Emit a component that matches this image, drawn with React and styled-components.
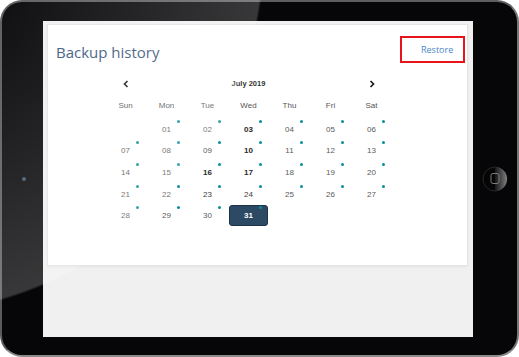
import React from "react";
import styled, { createGlobalStyle } from "styled-components";

const Global = createGlobalStyle`
  html, body { margin: 0; padding: 0; background: #ffffff; overflow: hidden; }
  * { box-sizing: border-box; }
`;

const Tablet = styled.div`
  position: relative;
  display: flex;
  width: 519px;
  height: 357px;
  padding: 19px 0 18px;
  border: 2px solid;
  border-color: #5e5e5e #777 #8a8a8a #5a5a5a;
  border-radius: 22px;
  background: #060608;
`;

const Side = styled.div`
  flex: none;
  width: ${(p) => p.$w}px;
  display: flex;
  align-items: center;
  justify-content: center;
`;

const Camera = styled.div`
  width: 4px;
  height: 4px;
  border-radius: 50%;
  background: #3d536a;
  margin-left: 2px;
`;

const Screen = styled.div`
  flex: none;
  width: 430px;
  height: 316px;
  padding: 3px 5px 0 4px;
  background: #f0f0f0;
`;

const Card = styled.div`
  height: 242px;
  background: #ffffff;
  border: 1px solid #e4e4e4;
  box-shadow: 0 1px 2px rgba(0, 0, 0, 0.06);
`;

const Header = styled.div`
  display: flex;
  justify-content: space-between;
  align-items: flex-start;
  padding: 11px 2px 0 8px;
`;

const Title = styled.h1`
  margin: 5.5px 0 0;
  font-family: "Open Sans", "Noto Sans", sans-serif;
  font-size: 15px;
  line-height: 20px;
  font-weight: 400;
  color: #37557a;
`;

const RestoreButton = styled.button`
  display: flex;
  align-items: center;
  width: 65px;
  height: 27px;
  padding: 0 0 0 19px;
  border: 2px solid #e8141b;
  background: transparent;
  font-family: "Open Sans", "Noto Sans", sans-serif;
  font-size: 9px;
  color: #4a86c8;
  cursor: pointer;
`;

const Calendar = styled.div`
  width: 287px;
  margin-left: 57px;
  font-family: "Liberation Sans", Arial, sans-serif;
`;

const Row = styled.div`
  display: grid;
  grid-template-columns: repeat(7, 41px);
  grid-auto-rows: ${(p) => p.$h}px;
  margin-top: ${(p) => p.$mt}px;
`;

const NavBtn = styled.div`
  display: flex;
  align-items: center;
  justify-content: center;
  grid-column: ${(p) => p.$col};
`;

const MonthLabel = styled.div`
  grid-column: 2 / 7;
  display: flex;
  align-items: center;
  justify-content: center;
  font-size: 7.5px;
  font-weight: 700;
  color: #333;
`;

const WeekDay = styled.div`
  display: flex;
  align-items: center;
  justify-content: center;
  font-size: 8px;
  color: #555;
`;

const Cell = styled.div`
  position: relative;
  display: flex;
  align-items: center;
  justify-content: center;
`;

const DayNum = styled.div`
  display: flex;
  align-items: center;
  justify-content: center;
  width: 39px;
  height: 21px;
  border-radius: 3px;
  font-size: 8px;
  font-weight: ${(p) => (p.$selected || p.$strong ? 700 : 400)};
  color: ${(p) => (p.$selected ? "#ffffff" : p.$strong ? "#2a2a2a" : p.$mid ? "#3c3c3c" : "#5a5a5a")};
  background: ${(p) => (p.$selected ? "#2c4a64" : "transparent")};
  border: 1px solid ${(p) => (p.$selected ? "#1d3347" : "transparent")};
`;

const Dot = styled.span`
  position: absolute;
  left: calc(50% + 10px);
  top: calc(50% - 9.5px);
  width: 3px;
  height: 3px;
  border-radius: 50%;
  background: #078f9b;
`;

const Gloss = styled.div`
  position: absolute;
  inset: -2px;
  border-radius: 22px;
  pointer-events: none;
  background: radial-gradient(
    circle 365px at -100px -50px,
    rgba(255, 255, 255, 0.04) 30%,
    rgba(255, 255, 255, 0.2) 99.3%,
    rgba(255, 255, 255, 0) 100%
  );
`;

const Chevron = ({ dir }) => (
  <svg width="6" height="8" viewBox="0 0 6 8">
    <path
      d={dir === "left" ? "M4.5 1 L1.5 4 L4.5 7" : "M1.5 1 L4.5 4 L1.5 7"}
      fill="none"
      stroke="#1c1c1c"
      strokeWidth="1.7"
    />
  </svg>
);

const HomeButton = () => (
  <svg width="26" height="26" viewBox="0 0 26 26" style={{ marginRight: 1 }}>
    <defs>
      <linearGradient id="hb" x1="0" x2="1" y1="0" y2="0">
        <stop offset="0" stopColor="#1b1b1b" />
        <stop offset="1" stopColor="#9c9c9c" />
      </linearGradient>
    </defs>
    <circle cx="13" cy="13" r="12" fill="#050505" stroke="#262626" strokeWidth="1" />
    <path d="M13 1 A12 12 0 0 1 13 25 Z" fill="url(#hb)" opacity="0.8" />
    <rect x="9" y="7.5" width="8" height="10" rx="2" fill="none" stroke="#7c7c7c" strokeWidth="1" />
  </svg>
);

const weekDays = ["Sun", "Mon", "Tue", "Wed", "Thu", "Fri", "Sat"];
const strongDays = [3, 10, 16, 17];
const midDays = [23, 24];

export default function App() {
  const cells = [null];
  for (let d = 1; d <= 31; d++) cells.push(d);

  return (
    <>
      <Global />
      <Tablet>
        <Side $w={41}>
          <Camera />
        </Side>
        <Screen>
          <Card>
            <Header>
              <Title>Backup history</Title>
              <RestoreButton>Restore</RestoreButton>
            </Header>
            <Calendar>
              <Row $h={16} $mt={12.5}>
                <NavBtn $col={1}>
                  <Chevron dir="left" />
                </NavBtn>
                <MonthLabel>July 2019</MonthLabel>
                <NavBtn $col={7}>
                  <Chevron dir="right" />
                </NavBtn>
              </Row>
              <Row $h={14} $mt={7.2}>
                {weekDays.map((w) => (
                  <WeekDay key={w}>{w}</WeekDay>
                ))}
              </Row>
              <Row $h={21.6} $mt={5.8}>
                {cells.map((d, i) =>
                  d === null ? (
                    <Cell key={`e${i}`} />
                  ) : (
                    <Cell key={d}>
                      <DayNum
                        $selected={d === 31}
                        $strong={strongDays.includes(d)}
                        $mid={midDays.includes(d)}
                      >
                        {String(d).padStart(2, "0")}
                      </DayNum>
                      <Dot />
                    </Cell>
                  )
                )}
              </Row>
            </Calendar>
          </Card>
        </Screen>
        <Side $w={44}>
          <HomeButton />
        </Side>
        <Gloss />
      </Tablet>
    </>
  );
}
